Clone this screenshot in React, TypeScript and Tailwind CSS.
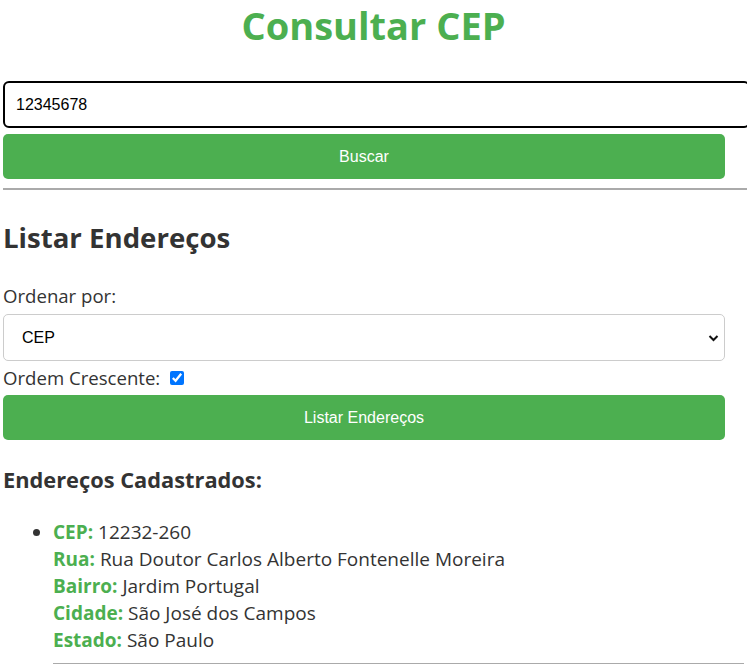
import { useState } from 'react';

const enderecos = [
  {
    cep: '12232-260',
    rua: 'Rua Doutor Carlos Alberto Fontenelle Moreira',
    bairro: 'Jardim Portugal',
    cidade: 'São José dos Campos',
    estado: 'São Paulo',
  },
];

const sans = "font-['Open_Sans',sans-serif]";
const arial = "font-['Liberation_Sans',Arial,sans-serif]";

export default function App() {
  const [cep, setCep] = useState('12345678');
  const [ordem, setOrdem] = useState('cep');
  const [crescente, setCrescente] = useState(true);

  return (
    <div className={`${sans} min-h-screen overflow-hidden bg-white text-[18.6px] leading-[27px] text-[#333]`}>
      <div className="px-[3px]">
        <h1 className="text-center text-[38px] font-bold leading-[50px] text-[#4CAF50]">Consultar CEP</h1>

        <div className="mt-[31px] w-[747px]">
          <input
            value={cep}
            onChange={(e) => setCep(e.target.value)}
            className={`${arial} block h-[47px] w-full rounded-[6px] border-2 border-black px-[11px] text-[16px] text-black outline-none`}
          />
        </div>
        <button className={`${arial} mt-[6px] block h-[45px] w-[722px] rounded-[5px] bg-[#4CAF50] text-[16px] text-white`}>
          Buscar
        </button>
      </div>

      <hr className="ml-[3px] mt-[9px] border-t-2 border-[#aaa]" />

      <div className="px-[3px]">
        <h2 className="mt-[29px] text-[27.6px] font-bold leading-[36px]">Listar Endereços</h2>

        <label className="mt-[27px] block">Ordenar por:</label>
        <div className="relative mt-[5px] w-[722px]">
          <select
            value={ordem}
            onChange={(e) => setOrdem(e.target.value)}
            className={`${arial} block h-[47px] w-full appearance-none rounded-[5px] border border-[#ccc] bg-white pl-[18px] text-[16px] text-black outline-none`}
          >
            <option value="cep">CEP</option>
            <option value="rua">Rua</option>
            <option value="bairro">Bairro</option>
            <option value="cidade">Cidade</option>
            <option value="estado">Estado</option>
          </select>
          <svg
            className="pointer-events-none absolute right-[6px] top-[19px]"
            width="11"
            height="10"
            viewBox="0 0 11 10"
            fill="none"
            stroke="#111"
            strokeWidth="2"
          >
            <path d="M1.5 3 L5.5 7 L9.5 3" />
          </svg>
        </div>

        <div className="flex h-[33px] items-center">
          <span>Ordem Crescente:</span>
          <input
            type="checkbox"
            checked={crescente}
            onChange={(e) => setCrescente(e.target.checked)}
            className="ml-[10px] h-[14px] w-[14px] accent-[#0075ff]"
          />
        </div>

        <button className={`${arial} mt-[1px] block h-[45px] w-[722px] rounded-[5px] bg-[#4CAF50] text-[16px] text-white`}>
          Listar Endereços
        </button>

        <h3 className="mt-[25px] text-[21.8px] font-bold leading-[30px]">Endereços Cadastrados:</h3>

        <ul className="mt-[24px] list-disc pl-[50px] text-[19px]">
          {enderecos.map((e) => (
            <li key={e.cep}>
              <div>
                <strong className="text-[#4CAF50]">CEP:</strong> {e.cep}
              </div>
              <div>
                <strong className="text-[#4CAF50]">Rua:</strong> {e.rua}
              </div>
              <div>
                <strong className="text-[#4CAF50]">Bairro:</strong> {e.bairro}
              </div>
              <div>
                <strong className="text-[#4CAF50]">Cidade:</strong> {e.cidade}
              </div>
              <div>
                <strong className="text-[#4CAF50]">Estado:</strong> {e.estado}
              </div>
              <hr className="mt-[9px] border-t-2 border-[#aaa]" />
            </li>
          ))}
        </ul>
      </div>
    </div>
  );
}
